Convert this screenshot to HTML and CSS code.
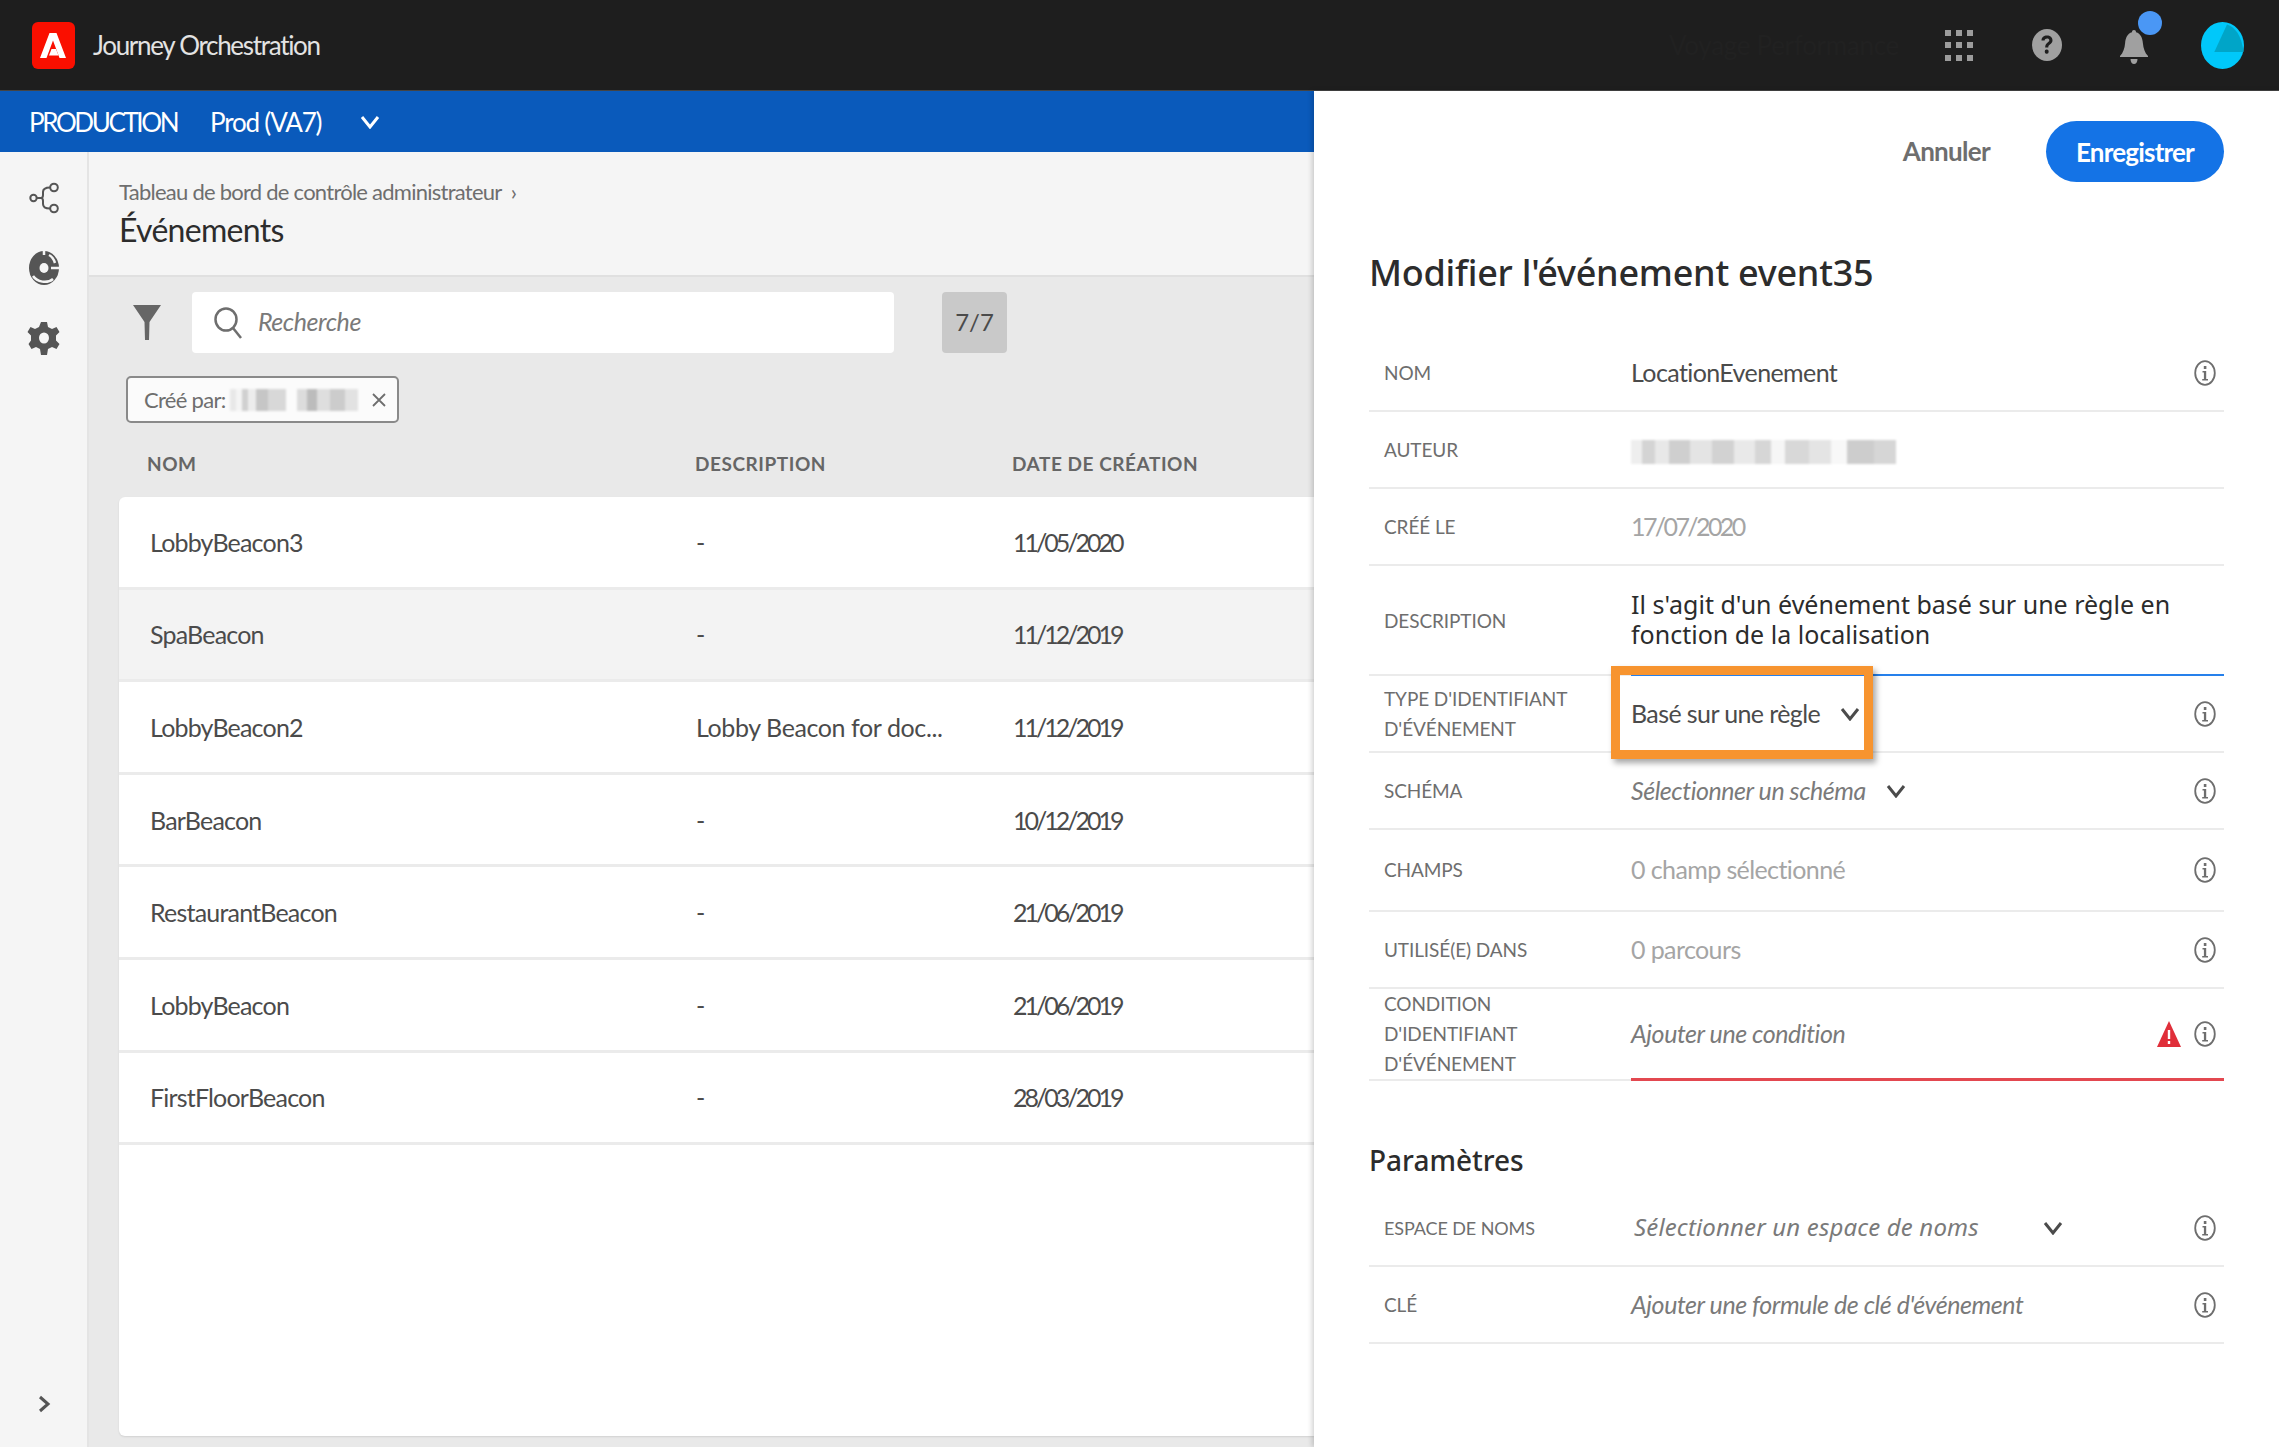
FILE: index.html
```html
<!DOCTYPE html>
<html lang="fr">

<head>
  <meta charset="UTF-8">
  <title>Journey Orchestration</title>
  <link rel="stylesheet" href="styles.css">
</head>

<body>
  <header class="topbar">
    <svg class="logo" viewBox="0 0 43 47">
      <rect width="43" height="47" rx="6" fill="#fa0f00" />
      <path d="M17.500 11h7L34 36h-6.500L21 18.500 14.500 36H8z" fill="#fff" />
      <path d="M19.500 27h4.500l2.500 6.500h-9.500z" fill="#fff" />
    </svg>
    <span class="product">Journey Orchestration</span>
    <span class="org">Voyage Performance</span>
    <svg class="grid-icon" viewBox="0 0 28 31" fill="#9c9c9c">
      <rect width="6" height="6" /><rect x="11" width="6" height="6" /><rect x="22" width="6" height="6" />
      <rect y="12" width="6" height="6" /><rect x="11" y="12" width="6" height="6" /><rect x="22" y="12" width="6" height="6" />
      <rect y="25" width="6" height="6" /><rect x="11" y="25" width="6" height="6" /><rect x="22" y="25" width="6" height="6" />
    </svg>
    <svg class="help-icon" viewBox="0 0 30 32">
      <ellipse cx="15" cy="16" rx="15" ry="16" fill="#a0a0a0" />
      <path d="M9.500 11.500c0-3.300 2.400-5 5.500-5s5.500 1.800 5.500 4.700c0 2.100-1.200 3.200-2.600 4.200-1.300 1-1.600 1.500-1.600 3.100h-3.100c0-2.500.6-3.600 2.200-4.800 1.200-.9 1.900-1.400 1.900-2.400 0-1-.9-1.700-2.200-1.700s-2.500.8-2.500 1.900z" fill="#1e1e1e" />
      <rect x="12.800" y="20.500" width="3.800" height="4.200" rx="1.600" fill="#1e1e1e" />
    </svg>
    <div class="bell">
      <svg class="bell-icon" viewBox="0 0 28 34" fill="#a0a0a0">
        <path d="M14 0c1.300 0 2 .9 2 2.200 4.700 1.300 6.400 5.600 6.900 11 .5 5.200 1.900 9.500 5.100 12.800v1H0v-1c3.200-3.300 4.600-7.600 5.100-12.800.5-5.400 2.200-9.700 6.900-11C12 .9 12.700 0 14 0z" />
        <path d="M10.500 29h7c0 3-1.500 5-3.500 5s-3.500-2-3.500-5z" />
      </svg>
      <span class="bell-dot"></span>
    </div>
    <svg class="avatar" viewBox="0 0 43 47">
      <ellipse cx="21.500" cy="23.500" rx="21.500" ry="23.500" fill="#00c8fa" />
      <path d="M26 2.500c8 2.800 14.500 10.500 16.500 27l-.2 .6h-29z" fill="#00a5c8" />
    </svg>
  </header>

  <div class="main">
    <div class="left">
      <div class="envbar">
        <span class="env-name">PRODUCTION</span>
        <span class="env-sandbox">Prod (VA7)</span>
        <svg class="chev chev-white" viewBox="0 0 20 14"><path d="M2 2l8 10 8-10" /></svg>
      </div>

      <div class="content">
        <nav class="sidebar">
          <svg class="side-icon" viewBox="0 0 30 34" fill="none" stroke="#555" stroke-width="2">
            <circle cx="4.500" cy="17" r="3.200" />
            <circle cx="25" cy="6.500" r="3.800" />
            <circle cx="25" cy="27.500" r="3.800" />
            <path d="M8 17h4c1.500 0 2-1 2-3v-3c0-3 2-4.500 7-4.500M12 17c1.500 0 2 1 2 3v3c0 3 2 4.500 7 4.500" />
          </svg>
          <svg class="side-icon" viewBox="0 0 30 34">
            <ellipse cx="15" cy="17" rx="15" ry="17" fill="#555" />
            <ellipse cx="15" cy="17" rx="4.500" ry="5" fill="#f5f5f5" />
            <path d="M15 0v4M22 17h8M4 25C8 31 18 33 24 28M20 4c4 2 5 5 6 8" stroke="#f5f5f5" stroke-width="2.500" fill="none" />
          </svg>
          <svg class="side-icon" viewBox="0 0 30 34">
            <path d="M12 0h6l1 5 4 2 4.500-2 3 5-3.500 3.500v5l3.500 3.500-3 5-4.500-2-4 2-1 6h-6l-1-6-4-2-4.500 2-3-5L2 18.500v-5L-1.500 10l3-5L6 7l4-2z" fill="#555" transform="translate(0 1)" />
            <ellipse cx="15" cy="17" rx="5" ry="5.500" fill="#f5f5f5" />
          </svg>
          <svg class="side-chev" viewBox="0 0 14 20"><path d="M3 3l8 7-8 7" /></svg>
        </nav>

        <div class="page">
          <div class="crumbs">
            <div class="crumb">Tableau de bord de contrôle administrateur &nbsp;›</div>
            <h1 class="page-title">Événements</h1>
          </div>

          <div class="list-area">
            <div class="toolbar">
              <svg class="filter-icon" viewBox="0 0 28 35"><path d="M0 0h28L16.500 17 16 35h-4l-.5-18z" /></svg>
              <div class="search">
                <svg class="search-icon" viewBox="0 0 28 32" fill="none" stroke="#6e6e6e" stroke-width="2.500">
                  <ellipse cx="12" cy="12.500" rx="10.500" ry="11" />
                  <path d="M19 21l8 10" />
                </svg>
                <span class="search-text">Recherche</span>
              </div>
              <div class="count">7/7</div>
            </div>

            <div class="tag">
              <span>Créé par:</span>
              <span class="blur blur-tag"></span>
              <svg class="tag-x" viewBox="0 0 14 14"><path d="M1 1l12 12M13 1L1 13" /></svg>
            </div>

            <div class="table-head">
              <span class="col-name">NOM</span>
              <span class="col-desc">DESCRIPTION</span>
              <span class="col-date">DATE DE CRÉATION</span>
            </div>

            <div class="table-card">
              <div class="table-row"><span class="col-name">LobbyBeacon3</span><span class="col-desc">-</span><span class="col-date">11/05/2020</span></div>
              <div class="table-row hover"><span class="col-name">SpaBeacon</span><span class="col-desc">-</span><span class="col-date">11/12/2019</span></div>
              <div class="table-row"><span class="col-name">LobbyBeacon2</span><span class="col-desc">Lobby Beacon for doc...</span><span class="col-date">11/12/2019</span></div>
              <div class="table-row"><span class="col-name">BarBeacon</span><span class="col-desc">-</span><span class="col-date">10/12/2019</span></div>
              <div class="table-row"><span class="col-name">RestaurantBeacon</span><span class="col-desc">-</span><span class="col-date">21/06/2019</span></div>
              <div class="table-row"><span class="col-name">LobbyBeacon</span><span class="col-desc">-</span><span class="col-date">21/06/2019</span></div>
              <div class="table-row"><span class="col-name">FirstFloorBeacon</span><span class="col-desc">-</span><span class="col-date">28/03/2019</span></div>
            </div>
          </div>
        </div>
      </div>
    </div>

    <aside class="panel">
      <div class="actions">
        <span class="cancel">Annuler</span>
        <span class="save">Enregistrer</span>
      </div>
      <h2 class="panel-title">Modifier l'événement event35</h2>

      <div class="form-row">
        <div class="label">NOM</div>
        <div class="value">LocationEvenement</div>
        <svg class="info" viewBox="0 0 22 26"><use href="#info" /></svg>
      </div>
      <div class="form-row">
        <div class="label">AUTEUR</div>
        <div class="value"><span class="blur blur-author"></span></div>
      </div>
      <div class="form-row">
        <div class="label">CRÉÉ LE</div>
        <div class="value muted digits">17/07/2020</div>
      </div>
      <div class="form-row row-desc">
        <div class="label">DESCRIPTION</div>
        <div class="value value-desc">Il s'agit d'un événement basé sur une règle en fonction de la localisation</div>
      </div>
      <div class="form-row">
        <div class="label">TYPE D'IDENTIFIANT D'ÉVÉNEMENT</div>
        <div class="value">Basé sur une règle</div>
        <svg class="chev chev-dark" viewBox="0 0 20 14"><path d="M2 2l8 10 8-10" /></svg>
        <svg class="info" viewBox="0 0 22 26"><use href="#info" /></svg>
        <div class="highlight"></div>
      </div>
      <div class="form-row">
        <div class="label">SCHÉMA</div>
        <div class="value placeholder">Sélectionner un schéma</div>
        <svg class="chev chev-dark" viewBox="0 0 20 14"><path d="M2 2l8 10 8-10" /></svg>
        <svg class="info" viewBox="0 0 22 26"><use href="#info" /></svg>
      </div>
      <div class="form-row row-fields">
        <div class="label">CHAMPS</div>
        <div class="value muted">0 champ sélectionné</div>
        <svg class="info" viewBox="0 0 22 26"><use href="#info" /></svg>
      </div>
      <div class="form-row">
        <div class="label">UTILISÉ(E) DANS</div>
        <div class="value muted">0 parcours</div>
        <svg class="info" viewBox="0 0 22 26"><use href="#info" /></svg>
      </div>
      <div class="form-row row-cond">
        <div class="label">CONDITION D'IDENTIFIANT D'ÉVÉNEMENT</div>
        <div class="value placeholder">Ajouter une condition</div>
        <svg class="warn" viewBox="0 0 24 26">
          <path d="M12 0l12 26H0z" fill="#e02f3a" />
          <rect x="10.800" y="9" width="2.400" height="9" fill="#fff" />
          <rect x="10.800" y="20" width="2.400" height="3" fill="#fff" />
        </svg>
        <svg class="info" viewBox="0 0 22 26"><use href="#info" /></svg>
      </div>

      <h3 class="section-title">Paramètres</h3>

      <div class="form-row">
        <div class="label label-ns">ESPACE DE NOMS</div>
        <div class="value value-ns">Sélectionner un espace de noms</div>
        <svg class="chev chev-dark chev-ns" viewBox="0 0 20 14"><path d="M2 2l8 10 8-10" /></svg>
        <svg class="info" viewBox="0 0 22 26"><use href="#info" /></svg>
      </div>
      <div class="form-row">
        <div class="label">CLÉ</div>
        <div class="value placeholder">Ajouter une formule de clé d'événement</div>
        <svg class="info" viewBox="0 0 22 26"><use href="#info" /></svg>
      </div>
    </aside>
  </div>

  <svg class="defs" width="0" height="0">
    <symbol id="info" viewBox="0 0 22 26">
      <ellipse cx="11" cy="13" rx="9.800" ry="11.800" fill="none" stroke="#6e6e6e" stroke-width="1.800" />
      <rect x="9.800" y="6" width="2.600" height="3" fill="#6e6e6e" />
      <path d="M8.500 11h3.700v8h1.800v1.500H8.200V19h1.700v-6.500H8.500z" fill="#6e6e6e" />
    </symbol>
  </svg>
</body>

</html>
```

FILE: styles.css
```css
* {
  box-sizing: border-box;
}

body {
  margin: 0;
  width: 2279px;
  height: 1447px;
  overflow: hidden;
  display: flex;
  flex-direction: column;
  background: #fff;
  color: #4b4b4b;
  font-family: Lato, "Liberation Sans", sans-serif;
}

h1,
h2,
h3 {
  margin: 0;
  font-weight: 400;
}

.defs {
  position: absolute;
}

/* top bar */
.topbar {
  flex: none;
  height: 91px;
  display: flex;
  align-items: center;
  padding: 0 35px 0 32px;
  background: #1e1e1e;
  border-bottom: 1px solid #444;
}

.logo {
  width: 43px;
  height: 47px;
}

.product {
  margin-left: 18px;
  color: #e3e3e3;
  font-size: 26px;
  letter-spacing: -1.3px;
}

.org {
  margin-left: auto;
  margin-right: 46px;
  color: #212121;
  font-size: 26px;
  letter-spacing: -0.3px;
}

.grid-icon {
  width: 28px;
  height: 31px;
}

.help-icon {
  margin-left: 59px;
  width: 30px;
  height: 32px;
}

.bell {
  position: relative;
  margin-left: 58px;
  width: 28px;
  height: 34px;
  margin-top: 4px;
}

.bell-icon {
  display: block;
  width: 28px;
  height: 34px;
}

.bell-dot {
  position: absolute;
  left: 18px;
  top: -19px;
  width: 24px;
  height: 24px;
  border-radius: 50%;
  background: #4a97f5;
}

.avatar {
  margin-left: 53px;
  width: 43px;
  height: 47px;
}

/* layout */
.main {
  flex: 1;
  display: flex;
  min-height: 0;
}

.left {
  width: 1314px;
  display: flex;
  flex-direction: column;
}

.envbar {
  flex: none;
  height: 61px;
  display: flex;
  align-items: center;
  padding-left: 29px;
  background: #0a5abb;
  color: #fff;
  font-size: 26px;
}

.env-name {
  letter-spacing: -2.4px;
}

.env-sandbox {
  margin-left: 33px;
  letter-spacing: -1.2px;
}

.chev {
  fill: none;
  stroke-width: 3px;
  width: 20px;
  height: 14px;
  flex: none;
}

.chev-white {
  margin-left: 39px;
  stroke: #fff;
}

.chev-dark {
  stroke: #4b4b4b;
  margin-left: 20px;
}

.content {
  flex: 1;
  display: flex;
  min-height: 0;
}

/* sidebar */
.sidebar {
  flex: none;
  width: 89px;
  display: flex;
  flex-direction: column;
  align-items: center;
  padding-top: 29px;
  gap: 36px;
  background: #f5f5f5;
  border-right: 2px solid #e4e4e4;
}

.side-icon {
  width: 30px;
  height: 34px;
  overflow: visible;
}

.side-chev {
  margin-top: auto;
  margin-bottom: 33px;
  width: 14px;
  height: 20px;
  fill: none;
  stroke: #555;
  stroke-width: 3px;
}

/* list page */
.page {
  flex: 1;
  display: flex;
  flex-direction: column;
  min-width: 0;
}

.crumbs {
  flex: none;
  height: 125px;
  padding: 27px 0 0 30px;
  background: #f5f5f5;
  border-bottom: 2px solid #e0e0e0;
}

.crumb {
  color: #6e6e6e;
  font-size: 22px;
  line-height: 26px;
  letter-spacing: -0.75px;
}

.page-title {
  margin-top: 5px;
  color: #2c2c2c;
  font-size: 32px;
  line-height: 40px;
  letter-spacing: -0.7px;
}

.list-area {
  flex: 1;
  min-height: 0;
  display: flex;
  flex-direction: column;
  padding: 15px 0 11px 30px;
  background: #e9e9e9;
  overflow: hidden;
}

.toolbar {
  flex: none;
  height: 61px;
  display: flex;
  align-items: center;
}

.filter-icon {
  margin-left: 14px;
  width: 28px;
  height: 35px;
  fill: #666;
  flex: none;
}

.search {
  margin-left: 31px;
  width: 702px;
  height: 61px;
  display: flex;
  align-items: center;
  padding-left: 22px;
  background: #fff;
  border-radius: 4px;
}

.search-icon {
  width: 28px;
  height: 32px;
}

.search-text {
  margin: 0 0 3px 16px;
  color: #7a7a7a;
  font-size: 25px;
  font-style: italic;
  letter-spacing: -0.45px;
}

.count {
  margin-left: 48px;
  width: 65px;
  height: 61px;
  display: flex;
  align-items: center;
  justify-content: center;
  padding-bottom: 2px;
  background: #c9c9c9;
  border-radius: 4px;
  color: #4b4b4b;
  font-size: 24px;
}

.tag {
  flex: none;
  margin: 23px 0 0 7px;
  width: 273px;
  height: 47px;
  display: flex;
  align-items: center;
  padding-left: 16px;
  background: #fbfbfb;
  border: 2px solid #8a8a8a;
  border-radius: 5px;
  color: #6e6e6e;
  font-size: 22px;
  letter-spacing: -0.7px;
}

.blur {
  display: inline-block;
  filter: blur(1.200px);
}

.blur-tag {
  margin-left: 4px;
  width: 128px;
  height: 22px;
  background: linear-gradient(90deg, #e8e8e8 0 5%, #f4f4f4 5% 9%, #d0d0d0 9% 14%, #ececec 14% 20%, #c6c6c6 20% 30%, #d8d8d8 30% 44%, #fbfbfb 44% 52%, #dcdcdc 52% 60%, #bcbcbc 60% 68%, #dedede 68% 78%, #cccccc 78% 90%, #e2e2e2 90% 100%);
}

.tag-x {
  margin-left: 14px;
  width: 14px;
  height: 14px;
  fill: none;
  stroke: #6e6e6e;
  stroke-width: 1.800px;
}

.table-head {
  flex: none;
  height: 74px;
  display: grid;
  grid-template-columns: 548px 317px 1fr;
  align-items: center;
  padding: 6px 0 0 28px;
  color: #666;
  font-size: 19px;
  font-weight: 700;
  letter-spacing: 0.55px;
}

.table-card {
  flex: 1;
  background: #fff;
  border-radius: 6px 0 0 6px;
  box-shadow: 0 1px 2px rgba(0, 0, 0, 0.1);
  overflow: hidden;
}

.table-row {
  height: 92.600px;
  display: grid;
  grid-template-columns: 546px 317px 1fr;
  align-items: center;
  padding-left: 31px;
  border-bottom: 3px solid #ebebeb;
  color: #4b4b4b;
  font-size: 25px;
  letter-spacing: -0.8px;
}

.table-row .col-desc {
  letter-spacing: -0.4px;
}

.table-row .col-date {
  letter-spacing: -3px;
}

.table-row.hover {
  background: #f3f3f3;
}

/* right panel */
.panel {
  flex: 1;
  position: relative;
  padding: 0 55px;
  background: #fff;
  box-shadow: -2px 0 5px rgba(0, 0, 0, 0.18);
}

.actions {
  height: 91px;
  padding-top: 30px;
  display: flex;
  justify-content: flex-end;
  align-items: flex-start;
}

.cancel {
  margin: 14px 56px 0 0;
  color: #6e6e6e;
  font-size: 26px;
  font-weight: 700;
  letter-spacing: -0.7px;
}

.save {
  width: 178px;
  height: 61px;
  display: flex;
  align-items: center;
  justify-content: center;
  border-radius: 31px;
  background: #1473e6;
  color: #fff;
  font-size: 26px;
  font-weight: 700;
  letter-spacing: -0.8px;
}

.panel-title {
  margin-top: 68px;
  height: 46px;
  margin-bottom: 39px;
  color: #2c2c2c;
  font-family: "Noto Sans", sans-serif;
  font-size: 36px;
  font-weight: 500;
  line-height: 46px;
  letter-spacing: -0.25px;
}

.form-row {
  position: relative;
  height: 77px;
  display: flex;
  align-items: center;
  border-bottom: 2px solid #ebebeb;
}

.row-desc {
  height: 110px;
}

.row-desc .label {
  padding-top: 2px;
}

.row-fields {
  height: 82px;
}

.row-cond {
  height: 92px;
}

.label {
  flex: none;
  width: 262px;
  padding-left: 15px;
  padding-right: 40px;
  color: #6e6e6e;
  font-size: 19px;
  line-height: 30px;
  letter-spacing: -0.1px;
}

.label-ns {
  padding-right: 0;
  font-size: 18px;
}

.value {
  margin-bottom: 2px;
  color: #4b4b4b;
  font-size: 25px;
  letter-spacing: -0.6px;
}

.muted {
  color: #a5a5a5;
}

.digits {
  letter-spacing: -2.600px;
}

.placeholder {
  color: #7a7a7a;
  font-style: italic;
  letter-spacing: -0.45px;
}

.value-desc {
  flex: 1;
  align-self: flex-start;
  margin-top: 23px;
  color: #2c2c2c;
  font-family: "Noto Sans", sans-serif;
  font-size: 25px;
  line-height: 30px;
  letter-spacing: 0;
}

.row-desc::after {
  content: "";
  position: absolute;
  left: 262px;
  right: 0;
  bottom: -2px;
  height: 2px;
  background: #2680eb;
}

.row-cond::after {
  content: "";
  position: absolute;
  left: 262px;
  right: 0;
  bottom: -2px;
  height: 3px;
  background: #e34850;
}

.value-ns {
  margin-left: 3px;
  color: #7a7a7a;
  font-family: "Noto Sans", sans-serif;
  font-size: 24px;
  font-style: italic;
  letter-spacing: 0.15px;
}

.chev-ns {
  margin-left: 64px;
}

.info {
  position: absolute;
  right: 8px;
  top: 50%;
  margin-top: -13px;
  width: 22px;
  height: 26px;
}

.warn {
  position: absolute;
  right: 43px;
  top: 50%;
  margin-top: -13px;
  width: 24px;
  height: 26px;
}

.highlight {
  position: absolute;
  left: 242px;
  top: -10px;
  width: 262px;
  height: 93px;
  border: 9px solid #f7942f;
  box-shadow: 3px 4px 6px rgba(0, 0, 0, 0.35);
}

.section-title {
  margin-top: 59px;
  height: 40px;
  margin-bottom: 10px;
  color: #2c2c2c;
  font-family: "Noto Sans", sans-serif;
  font-size: 28px;
  font-weight: 500;
  line-height: 40px;
}

.blur-author {
  width: 270px;
  height: 24px;
  vertical-align: middle;
  background: linear-gradient(90deg, #eee 0 4%, #d4d4d4 4% 9%, #e8e8e8 9% 14%, #cfcfcf 14% 22%, #e4e4e4 22% 30%, #d2d2d2 30% 38%, #e9e9e9 38% 46%, #d6d6d6 46% 52%, #f6f6f6 52% 57%, #d8d8d8 57% 66%, #e4e4e4 66% 74%, #f8f8f8 74% 80%, #cdcdcd 80% 90%, #d6d6d6 90% 98%, #fff 98%);
}
```
